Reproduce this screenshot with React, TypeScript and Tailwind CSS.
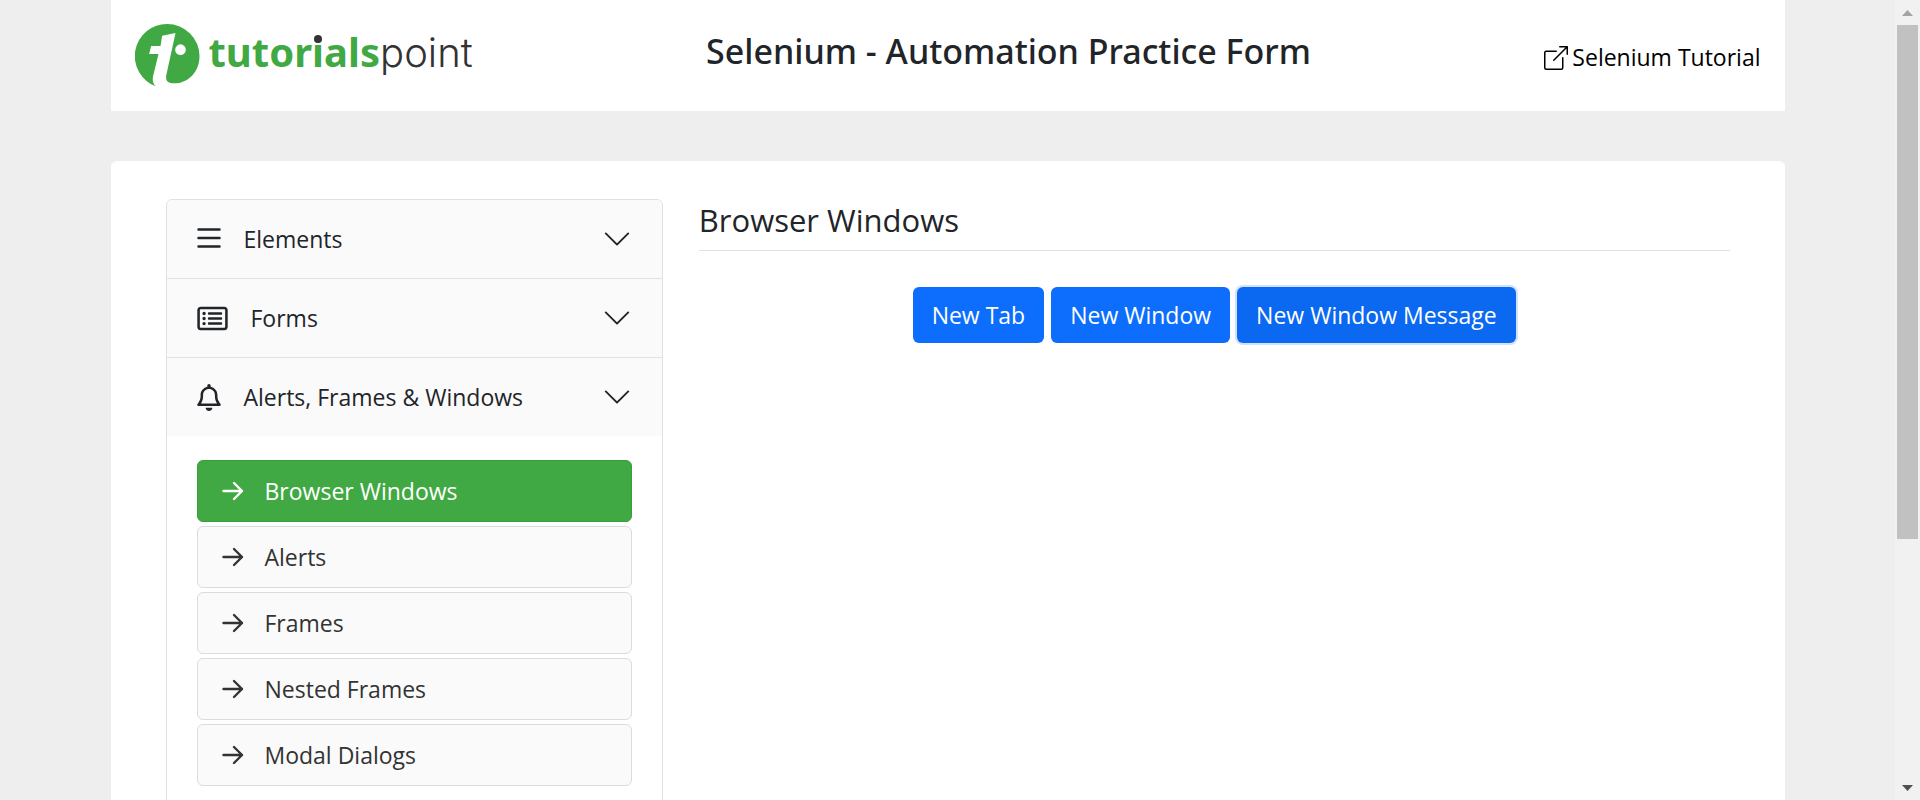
import type { ComponentType } from "react";
import { BsBoxArrowUpRight, BsChevronDown } from "react-icons/bs";
import { FaRegBell, FaRegRectangleList } from "react-icons/fa6";

type Section = {
  label: string;
  Icon: ComponentType<{ className?: string }>;
  iconClass: string;
};

function Bars({ className }: { className?: string }) {
  return (
    <svg viewBox="0 0 24 27" className={className} fill="none" stroke="currentColor" strokeWidth="2.5" strokeLinecap="round" aria-hidden="true">
      <path d="M1.500 3.500h21M1.500 12h21M1.500 20.500h21" />
    </svg>
  );
}

const sections: Section[] = [
  { label: "Elements", Icon: Bars, iconClass: "h-[27px] w-6" },
  { label: "Forms", Icon: FaRegRectangleList, iconClass: "h-[27px] w-[31px]" },
  { label: "Alerts, Frames & Windows", Icon: FaRegBell, iconClass: "h-[27px] w-6" },
];

const links = ["Browser Windows", "Alerts", "Frames", "Nested Frames", "Modal Dialogs"];

const buttons = ["New Tab", "New Window", "New Window Message"];

function ArrowRight() {
  return (
    <svg viewBox="0 0 22 20" className="h-5 w-[22px] shrink-0" fill="none" stroke="currentColor" strokeWidth="2.4" strokeLinecap="round" strokeLinejoin="round" aria-hidden="true">
      <path d="M1.500 10H20M12 2l8 8-8 8" />
    </svg>
  );
}

function Logo() {
  return (
    <a href="#" className="flex items-center gap-[9px]" aria-label="tutorialspoint">
      <svg viewBox="15 27 194 189" className="h-[63px] w-[65px]" aria-hidden="true">
        <path
          fill="#41a943"
          d="M111.500 27A96.500 96.500 0 0 0 77 214C68 205 66 196 69 182L85 117H57L63 93H91L96 62L136 54L108 182C106 197 113 205 132 205C174 205 208 170 208 123.500A96.500 96.500 0 0 0 111.500 27Z"
        />
        <circle cx="151" cy="104" r="16" fill="#fff" />
      </svg>
      <span className="flex items-baseline pb-1.5 text-[40px] leading-[54px]">
        <span className="font-['Noto_Sans',sans-serif] font-bold text-[#41a943]">
          tutor
          <span className="relative">
            i
            <span className="absolute top-[11px] left-[2px] size-2 rounded-full bg-[#333]" />
          </span>
          als
        </span>
        <span className="font-['Inter',sans-serif] font-light text-[#333]">point</span>
      </span>
    </a>
  );
}

function Scrollbar() {
  return (
    <div className="flex w-[25px] shrink-0 flex-col items-center bg-[#f1f1f1]" aria-hidden="true">
      <div className="flex h-[25px] items-center">
        <svg viewBox="0 0 11 6" className="h-1.5 w-[11px] fill-[#a3a3a3]">
          <path d="M0 6 5.500 0 11 6z" />
        </svg>
      </div>
      <div className="flex w-full flex-1 flex-col items-center">
        <div className="h-[68.500%] w-[21px] bg-[#c1c1c1]" />
      </div>
      <div className="flex h-[25px] items-center">
        <svg viewBox="0 0 11 6" className="h-1.5 w-[11px] fill-[#505050]">
          <path d="M0 0 5.500 6 11 0z" />
        </svg>
      </div>
    </div>
  );
}

export default function App() {
  return (
    <div className="flex h-screen overflow-hidden bg-[#eee] font-['Open_Sans',sans-serif] text-[23px] text-[#212529]">
      <div className="min-w-0 flex-1 overflow-hidden">
        <div className="mx-auto flex max-w-[1674px] flex-col gap-[50px]">
          <header className="flex h-[111px] items-center justify-between bg-white px-6">
            <Logo />
            <h1 className="pb-2.5 font-['Noto_Sans',sans-serif] text-[34px] leading-[42px] font-medium">
              Selenium - Automation Practice Form
            </h1>
            <a href="#" className="flex items-center gap-1 pt-1 text-black">
              <BsBoxArrowUpRight className="size-6" />
              Selenium Tutorial
            </a>
          </header>

          <main className="grid min-h-screen grid-cols-3 gap-9 rounded-t-md bg-white px-[55px] pt-[38px]">
            <nav className="rounded-md border border-[#dee2e6]">
              {sections.map(({ label, Icon, iconClass }) => (
                <button
                  key={label}
                  type="button"
                  className="flex h-[79px] w-full items-center gap-[23px] border-b border-[#dee2e6] bg-[#fafafa] px-[30px] text-left first:rounded-t-md last-of-type:h-[78px] last-of-type:border-b-0"
                >
                  <Icon className={iconClass} />
                  <span className="flex-1">{label}</span>
                  <BsChevronDown className="size-[30px]" />
                </button>
              ))}
              <ul className="flex flex-col gap-1 px-[30px] py-6">
                {links.map((label) => (
                  <li key={label}>
                    <a
                      href="#"
                      aria-current={label === "Browser Windows" ? "page" : undefined}
                      className="flex h-[62px] items-center gap-[21px] rounded-md border border-[#dcdcdc] bg-[#fafafa] px-6 text-[#333] aria-[current=page]:border-[#37a039] aria-[current=page]:bg-[#41a943] aria-[current=page]:text-white"
                    >
                      <ArrowRight />
                      {label}
                    </a>
                  </li>
                ))}
              </ul>
            </nav>

            <section className="col-span-2">
              <h2 className="border-b border-[#dee2e6] pb-2 text-[31px] leading-[43px]">Browser Windows</h2>
              <div className="flex justify-center gap-[7px] pt-9">
                {buttons.map((label) => (
                  <button
                    key={label}
                    type="button"
                    className="h-14 rounded-md bg-[#0d6efd] px-[19px] text-white last:bg-[#0b68f0] last:ring-2 last:ring-[#cfe2ff]"
                  >
                    {label}
                  </button>
                ))}
              </div>
            </section>
          </main>
        </div>
      </div>
      <Scrollbar />
    </div>
  );
}
